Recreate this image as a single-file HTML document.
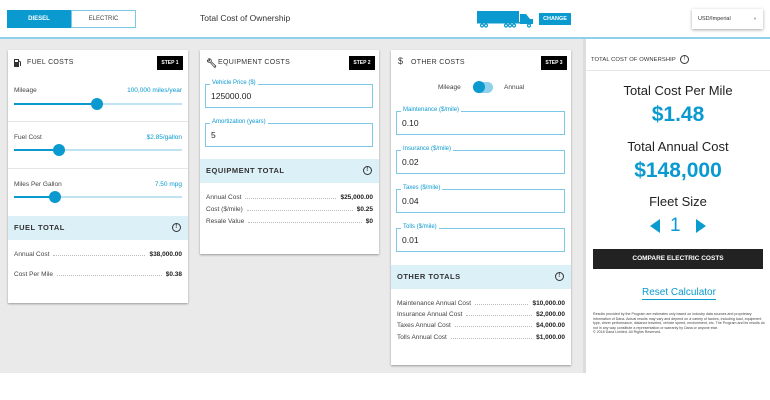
<!DOCTYPE html>
<html><head><style>
*{box-sizing:border-box;margin:0;padding:0}
body{width:770px;height:400px;background:#fff;font-family:"Liberation Sans",sans-serif;color:#333;position:relative;overflow:hidden}
.a{position:absolute}
.blue{color:#0a9ad0}
.card{position:absolute;background:#fff;box-shadow:0 1px 2px rgba(0,0,0,.35)}
.ht{position:absolute;top:8px;font-size:7px;letter-spacing:.3px;color:#333}
.step{position:absolute;top:6px;background:#000;color:#fff;font-size:5px;font-weight:bold;width:26px;height:14px;line-height:14px;text-align:center}
.lbl{position:absolute;font-size:6.5px;color:#444}
.val{position:absolute;right:6px;font-size:6.5px;color:#0a9ad0}
.track{position:absolute;left:6px;right:6px;height:2px;background:#bfe3f1}
.fill{position:absolute;left:0;top:0;height:2px;background:#0a9ad0}
.thumb{position:absolute;top:-5px;width:12px;height:12px;border-radius:50%;background:#0a9ad0}
.div{position:absolute;left:0;right:0;height:1px;background:#e6e6e6}
.band{position:absolute;left:0;right:0;height:24px;background:#dcf0f7;font-size:7.5px;font-weight:bold;letter-spacing:.5px;color:#333;line-height:24px;padding-left:6px}
.info{position:absolute;right:7px;top:7px;width:9px;height:9px;border:1px solid #333;border-radius:50%;font-size:6px;line-height:7px;text-align:center;font-weight:bold}
.row{position:absolute;left:6px;right:6px;font-size:6.5px;color:#444;display:flex;align-items:flex-end}
.row .d{flex:1;border-bottom:1px dotted #bbb;margin:0 4px 2px}
.row b{color:#222}
.inp{position:absolute;left:5px;right:6px;height:24px;border:1px solid #7cc8e6;font-size:8.5px;padding:6px 0 0 5px;color:#222}
.inp span{position:absolute;top:-5px;left:4px;background:#fff;padding:0 2px;font-size:6px;color:#0a9ad0}
</style></head><body>
<div class="a" style="left:7px;top:10px;width:64px;height:18px;background:#0a9ad0;color:#fff;font-size:6px;font-weight:bold;text-align:center;line-height:18px">DIESEL</div>
<div class="a" style="left:71px;top:10px;width:65px;height:18px;border:1px solid #7cc8e6;color:#444;font-size:6px;text-align:center;line-height:16px">ELECTRIC</div>
<div class="a" style="left:200px;top:13px;font-size:8.5px;color:#333">Total Cost of Ownership</div>
<svg class="a" style="left:476px;top:10px" width="60" height="18" viewBox="0 0 60 18">
<rect x="1" y="1" width="42" height="11" fill="#0a9ad0"/>
<path d="M44 4h6l4 5h3v5h-13z" fill="#0a9ad0"/>
<rect x="1" y="12" width="56" height="1.5" fill="#0a9ad0"/>
<g fill="none" stroke="#0a9ad0" stroke-width="1.2"><circle cx="6" cy="15.5" r="1.5"/><circle cx="10" cy="15.5" r="1.5"/><circle cx="30" cy="15.5" r="1.5"/><circle cx="34" cy="15.5" r="1.5"/><circle cx="38" cy="15.5" r="1.5"/><circle cx="53" cy="15.5" r="1.5"/></g></svg>
<div class="a" style="left:539px;top:13px;width:32px;height:12px;background:#0a9ad0;color:#fff;font-size:5.5px;font-weight:bold;text-align:center;line-height:12px">CHANGE</div>
<div class="a" style="left:692px;top:9px;width:71px;height:20px;box-shadow:0 1px 3px rgba(0,0,0,.35);font-size:5.5px;color:#333;padding:7px 0 0 6px">USD/Imperial<span style="position:absolute;right:6px;top:7px;font-size:4px;color:#999">▼</span></div>
<div class="a" style="left:0;top:37px;width:770px;height:2px;background:#8fd0ea"></div>
<div class="a" style="left:0;top:39px;width:585px;height:334px;background:#eaeaea"></div>
<div class="a" style="left:583px;top:39px;width:3px;height:334px;background:#ddd"></div>

<div class="card" style="left:8px;top:50px;width:180px;height:253px">
<svg class="a" style="left:6px;top:9px" width="7" height="8" viewBox="0 0 7 8"><rect x="0" y="0" width="5" height="8" fill="#333"/><rect x="1" y="1" width="3" height="2" fill="#fff"/><path d="M5 2l1.5 1v4" stroke="#333" fill="none"/></svg>
<div class="ht" style="left:19px;top:9px">FUEL COSTS</div>
<div class="step" style="left:149px">STEP 1</div>
<div class="lbl" style="left:6px;top:37px">Mileage</div><div class="val" style="top:37px">100,000 miles/year</div>
<div class="track" style="top:53px"><div class="fill" style="width:84px"></div><div class="thumb" style="left:77px"></div></div>
<div class="div" style="top:71px"></div>
<div class="lbl" style="left:6px;top:84px">Fuel Cost</div><div class="val" style="top:84px">$2.85/gallon</div>
<div class="track" style="top:99px"><div class="fill" style="width:46px"></div><div class="thumb" style="left:39px"></div></div>
<div class="div" style="top:118px"></div>
<div class="lbl" style="left:6px;top:131px">Miles Per Gallon</div><div class="val" style="top:131px">7.50 mpg</div>
<div class="track" style="top:146px"><div class="fill" style="width:42px"></div><div class="thumb" style="left:35px"></div></div>
<div class="band" style="top:166px">FUEL TOTAL<div class="info">!</div></div>
<div class="row" style="top:201px">Annual Cost<span class="d"></span><b>$38,000.00</b></div>
<div class="row" style="top:221px">Cost Per Mile<span class="d"></span><b>$0.38</b></div>
</div>

<div class="card" style="left:200px;top:50px;width:179px;height:204px">
<div class="a" style="left:6px;top:8px;font-size:9px;font-weight:bold">🔧︎</div>
<div class="ht" style="left:18px;top:9px">EQUIPMENT COSTS</div>
<div class="step" style="left:149px">STEP 2</div>
<div class="inp" style="top:34px"><span>Vehicle Price ($)</span>125000.00</div>
<div class="inp" style="top:73px"><span>Amortization (years)</span>5</div>
<div class="band" style="top:109px">EQUIPMENT TOTAL<div class="info">!</div></div>
<div class="row" style="top:144px">Annual Cost<span class="d"></span><b>$25,000.00</b></div>
<div class="row" style="top:156px">Cost ($/mile)<span class="d"></span><b>$0.25</b></div>
<div class="row" style="top:168px">Resale Value<span class="d"></span><b>$0</b></div>
</div>

<div class="card" style="left:391px;top:50px;width:180px;height:315px">
<div class="a" style="left:7px;top:6px;font-size:9px">$</div>
<div class="ht" style="left:20px;top:9px">OTHER COSTS</div>
<div class="step" style="left:150px">STEP 3</div>
<div class="lbl" style="left:47px;top:34px">Mileage</div>
<div class="a" style="left:82px;top:32px;width:20px;height:11px;border-radius:6px;background:#8fd0ea"></div>
<div class="a" style="left:82px;top:31px;width:12px;height:12px;border-radius:50%;background:#0a9ad0"></div>
<div class="lbl" style="left:113px;top:34px">Annual</div>
<div class="inp" style="top:61px"><span>Maintenance ($/mile)</span>0.10</div>
<div class="inp" style="top:100px"><span>Insurance ($/mile)</span>0.02</div>
<div class="inp" style="top:139px"><span>Taxes ($/mile)</span>0.04</div>
<div class="inp" style="top:178px"><span>Tolls ($/mile)</span>0.01</div>
<div class="band" style="top:215px">OTHER TOTALS<div class="info">!</div></div>
<div class="row" style="top:250px">Maintenance Annual Cost<span class="d"></span><b>$10,000.00</b></div>
<div class="row" style="top:261px">Insurance Annual Cost<span class="d"></span><b>$2,000.00</b></div>
<div class="row" style="top:272px">Taxes Annual Cost<span class="d"></span><b>$4,000.00</b></div>
<div class="row" style="top:284px">Tolls Annual Cost<span class="d"></span><b>$1,000.00</b></div>
</div>

<div class="a" style="left:591px;top:57px;font-size:5.8px;color:#333;letter-spacing:.1px">TOTAL COST OF OWNERSHIP</div>
<div class="a" style="left:680px;top:55px;width:9px;height:9px;border:1px solid #333;border-radius:50%;font-size:6px;line-height:7px;text-align:center">!</div>
<div class="a" style="left:586px;top:70px;width:184px;height:1px;background:#e6e6e6"></div>
<div class="a" style="left:586px;width:184px;text-align:center;top:83px;font-size:13px;color:#222">Total Cost Per Mile</div>
<div class="a blue" style="left:586px;width:184px;text-align:center;top:103px;font-size:21px;font-weight:bold">$1.48</div>
<div class="a" style="left:586px;width:184px;text-align:center;top:139px;font-size:13px;color:#222">Total Annual Cost</div>
<div class="a blue" style="left:586px;width:184px;text-align:center;top:159px;font-size:21px;font-weight:bold">$148,000</div>
<div class="a" style="left:586px;width:184px;text-align:center;top:194px;font-size:13px;color:#222">Fleet Size</div>
<svg class="a" style="left:650px;top:219px" width="10" height="14"><path d="M10 0v14L0 7z" fill="#0a9ad0"/></svg>
<div class="a blue" style="left:670px;top:215px;font-size:19px">1</div>
<svg class="a" style="left:696px;top:219px" width="10" height="14"><path d="M0 0v14L10 7z" fill="#0a9ad0"/></svg>
<div class="a" style="left:593px;top:249px;width:170px;height:20px;background:#222;color:#fff;font-size:6.5px;font-weight:bold;text-align:center;line-height:20px">COMPARE ELECTRIC COSTS</div>
<div class="a blue" style="left:642px;top:287px;font-size:10px;border-bottom:1px solid #0a9ad0;padding-bottom:1px">Reset Calculator</div>
<div class="a" style="left:593px;top:312px;width:172px;font-size:3.6px;line-height:4.6px;color:#444">Results provided by the Program are estimates only based on industry data sources and proprietary information of Dana. Actual results may vary and depend on a variety of factors, including load, equipment type, driver performance, distance traveled, vehicle speed, environment, etc. The Program and its results do not in any way constitute a representation or warranty by Dana or anyone else.<br>© 2018 Dana Limited. All Rights Reserved.</div>
</body></html>
